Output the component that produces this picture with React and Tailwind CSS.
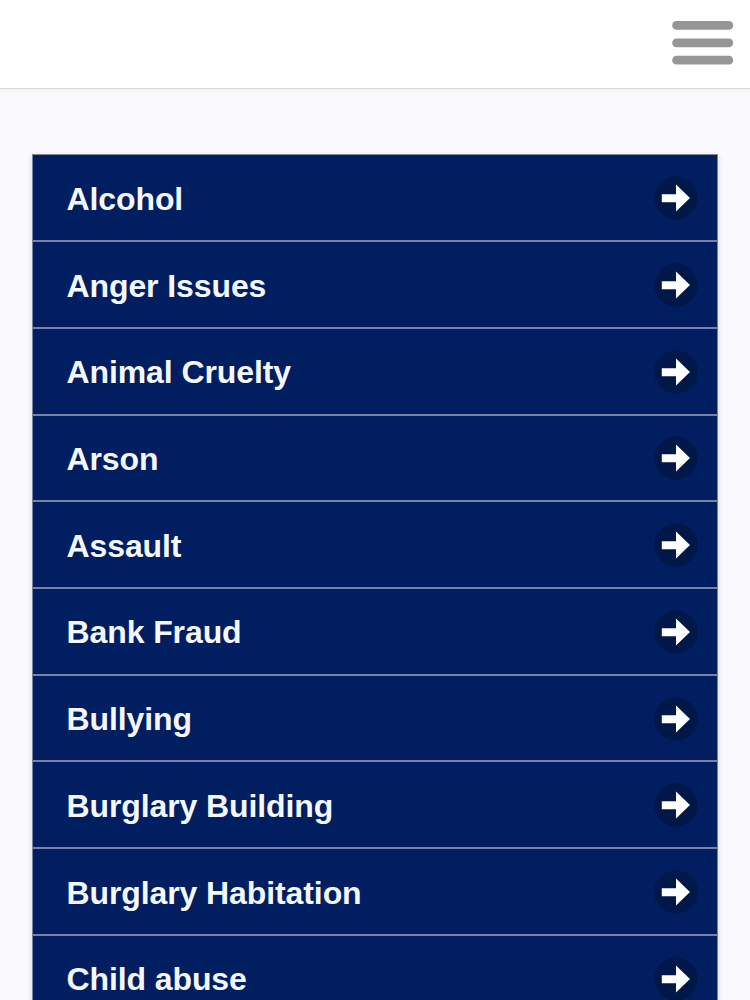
const topics = [
    'Alcohol',
    'Anger Issues',
    'Animal Cruelty',
    'Arson',
    'Assault',
    'Bank Fraud',
    'Bullying',
    'Burglary Building',
    'Burglary Habitation',
    'Child abuse',
];

function MenuButton() {
    return (
        <button type="button" aria-label="Menu">
            <svg viewBox="0 0 62 46" className="h-[46px] w-[62px]" aria-hidden="true">
                <g fill="#979598">
                    <rect x="0.2" y="1" width="61" height="8.8" rx="4.4" />
                    <rect x="0.2" y="18.4" width="61" height="8.8" rx="4.4" />
                    <rect x="0.2" y="35.8" width="61" height="8.8" rx="4.4" />
                </g>
            </svg>
        </button>
    );
}

function ArrowIcon() {
    return (
        <svg viewBox="0 0 44 44" className="size-11 shrink-0" aria-hidden="true">
            <circle cx="22" cy="22" r="21.7" fill="#00174a" />
            <path d="M7.8 18.2H22V8.5L36 22L22 35.5V26.2H7.8Z" fill="#fff" />
        </svg>
    );
}

function TopicRow({ label }) {
    return (
        <li className="h-[86.72px] border-b-2 border-[#7681a3] last:border-b-0">
            <a href="#" className="flex h-[84.7px] items-center justify-between pt-[1.2px] pr-[19px] pl-[33.5px]">
                <span className="pt-px text-[32px] leading-10 font-bold tracking-[-0.1px] text-[#f5f7ff]">{label}</span>
                <ArrowIcon />
            </a>
        </li>
    );
}

export default function App() {
    return (
        <div className="h-screen overflow-hidden bg-[#faf9fb] font-['Liberation_Sans',Arial,sans-serif]">
            <header className="flex h-[89px] items-start justify-end border-b border-[#d9d8da] bg-white pt-5 pr-4 shadow-[0_2px_8px_rgba(0,0,0,0.04)]">
                <MenuButton />
            </header>

            <main className="px-8 pt-[65px]">
                <ul className="border-x border-t border-x-[#7681a3] border-t-[#868b9b] bg-[#001e60] pt-[0.4px] shadow-[0_2px_6px_rgba(0,0,0,0.15)]">
                    {topics.map((topic) => (
                        <TopicRow key={topic} label={topic} />
                    ))}
                </ul>
            </main>
        </div>
    );
}
